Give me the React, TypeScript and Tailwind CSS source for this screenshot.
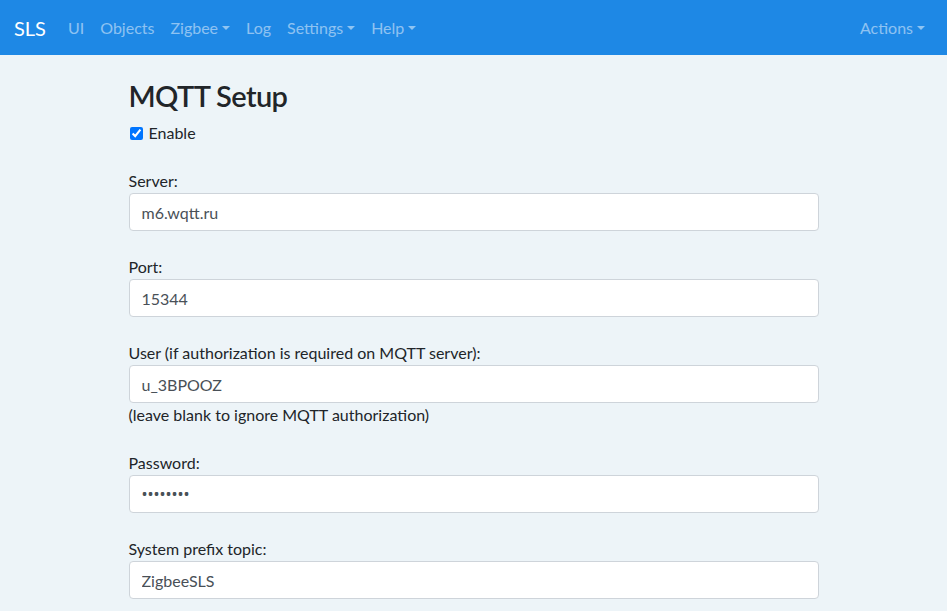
import React from "react";

const font = { fontFamily: 'Lato, "Noto Sans", "Liberation Sans", sans-serif' };
const dotsFont = { fontFamily: '"Noto Sans", "Liberation Sans", sans-serif' };

function NavLink({ children, caret }: { children: React.ReactNode; caret?: boolean }) {
  return (
    <a className="flex items-center px-2 py-2 text-base leading-6 text-white/50" href="#">
      {children}
      {caret && (
        <span className="ml-[4px] mt-[1px] inline-block h-0 w-0 border-x-[4.8px] border-t-[4.8px] border-x-transparent border-t-white/50" />
      )}
    </a>
  );
}

function Field({
  label,
  value,
  type = "text",
  help,
}: {
  label: string;
  value: string;
  type?: string;
  help?: string;
}) {
  return (
    <div className="mb-6">
      <label className="block text-base leading-6 text-[#212529]">{label}</label>
      <input
        type={type}
        defaultValue={value}
        className="block h-[38px] w-full rounded-[4px] border border-[#ced4da] bg-white px-3 text-base text-[#495057] outline-none"
        style={type === "password" ? dotsFont : font}
      />
      {help && <div className="text-base leading-6 text-[#212529]">{help}</div>}
    </div>
  );
}

export default function App() {
  return (
    <div className="min-h-[611px] bg-[#edf4f8]" style={font}>
      {/* Navbar */}
      <nav className="flex h-[55px] items-center justify-between bg-[#1e88e5] pl-[14px] pr-[14px]">
        <div className="flex items-center">
          <a href="#" className="mr-[14px] text-xl leading-[30px] text-white">
            SLS
          </a>
          <NavLink>UI</NavLink>
          <NavLink>Objects</NavLink>
          <NavLink caret>Zigbee</NavLink>
          <NavLink>Log</NavLink>
          <NavLink caret>Settings</NavLink>
          <NavLink caret>Help</NavLink>
        </div>
        <NavLink caret>Actions</NavLink>
      </nav>

      {/* Form */}
      <div className="mx-auto max-w-[720px] px-[15px] pt-[22px]">
        <h2 className="mb-[6px] text-[29px] font-semibold leading-[38px] tracking-[-0.6px] text-[#212529]">
          MQTT Setup
        </h2>
        <div className="mb-6 flex h-6 items-center">
          <input type="checkbox" defaultChecked className="ml-[1px] h-[13px] w-[13px] accent-[#0075ff]" />
          <span className="ml-[6px] text-base leading-6 text-[#212529]">Enable</span>
        </div>

        <Field label="Server:" value="m6.wqtt.ru" />
        <Field label="Port:" value="15344" />
        <Field
          label="User (if authorization is required on MQTT server):"
          value="u_3BPOOZ"
          help="(leave blank to ignore MQTT authorization)"
        />
        <Field label="Password:" value="secret12" type="password" />
        <Field label="System prefix topic:" value="ZigbeeSLS" />
      </div>
    </div>
  );
}
